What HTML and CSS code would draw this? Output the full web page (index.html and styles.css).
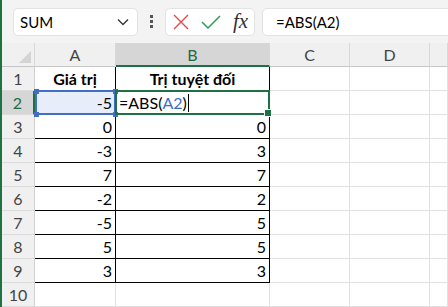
FILE: index.html
```html
<!DOCTYPE html>
<html lang="vi">
<head>
    <meta charset="UTF-8">
    <title>ABS</title>
    <link rel="stylesheet" href="styles.css">
</head>
<body>
    <div id="app">
        <div id="toolbar">
            <div id="nameBox">
                <span>SUM</span>
                <svg class="chev" width="12" height="8" viewBox="0 0 12 8"><polyline points="1,1.5 6,6.5 11,1.5" fill="none" stroke="#333" stroke-width="1.3"/></svg>
            </div>
            <div id="dots"><i></i><i></i><i></i></div>
            <div id="btnBox">
                <svg width="16" height="16" viewBox="0 0 16 16"><path d="M1 1 L15 15 M15 1 L1 15" stroke="#e5484d" stroke-width="1.4" fill="none"/></svg>
                <svg width="20" height="16" viewBox="0 0 20 16"><polyline points="1,8 7,14 19,2" stroke="#2e9b57" stroke-width="1.5" fill="none"/></svg>
                <span id="fx">fx</span>
            </div>
            <div id="formula">=ABS(A2)</div>
        </div>

        <div id="sheet">
            <div class="hd corner"></div>
            <div class="hd">A</div>
            <div class="hd sel">B</div>
            <div class="hd">C</div>
            <div class="hd">D</div>
            <div class="hd"></div>

            <div class="rh">1</div>
            <div class="c tb th">Giá trị</div>
            <div class="c tb th">Trị tuyệt đối</div>
            <div class="c"></div><div class="c"></div><div class="c"></div>

            <div class="rh sel">2</div>
            <div class="c tb num ref">-5<i class="knob tl"></i><i class="knob tr"></i><i class="knob bl"></i><i class="knob br"></i></div>
            <div class="c tb edit">=ABS(<span class="blue">A2</span>)<span class="caret"></span></div>
            <div class="c"></div><div class="c"></div><div class="c"></div>

            <div class="rh">3</div>
            <div class="c tb num">0</div>
            <div class="c tb num">0</div>
            <div class="c"></div><div class="c"></div><div class="c"></div>

            <div class="rh">4</div>
            <div class="c tb num">-3</div>
            <div class="c tb num">3</div>
            <div class="c"></div><div class="c"></div><div class="c"></div>

            <div class="rh">5</div>
            <div class="c tb num">7</div>
            <div class="c tb num">7</div>
            <div class="c"></div><div class="c"></div><div class="c"></div>

            <div class="rh">6</div>
            <div class="c tb num">-2</div>
            <div class="c tb num">2</div>
            <div class="c"></div><div class="c"></div><div class="c"></div>

            <div class="rh">7</div>
            <div class="c tb num">-5</div>
            <div class="c tb num">5</div>
            <div class="c"></div><div class="c"></div><div class="c"></div>

            <div class="rh">8</div>
            <div class="c tb num">5</div>
            <div class="c tb num">5</div>
            <div class="c"></div><div class="c"></div><div class="c"></div>

            <div class="rh">9</div>
            <div class="c tb num">3</div>
            <div class="c tb num">3</div>
            <div class="c"></div><div class="c"></div><div class="c"></div>

            <div class="rh">10</div>
            <div class="c"></div><div class="c"></div><div class="c"></div><div class="c"></div><div class="c"></div>
        </div>
    </div>
</body>
</html>
```

FILE: styles.css
```css
* { box-sizing: border-box; }
body { margin: 0; font-family: Lato, "Liberation Sans", sans-serif; color: #000; overflow: hidden; }
#app { width: 448px; height: 307px; border-left: 2px solid #1f7244; overflow: hidden; }

#toolbar {
    height: 43px; background-color: #f3f3f3;
    display: flex; align-items: center;
    padding-left: 11px;
}
#nameBox {
    width: 125px; height: 28px;
    background-color: white; border: 1px solid #e3e3e3; border-radius: 5px;
    display: flex; align-items: center;
    padding: 0 8px 0 6px;
    font-size: 15px;
}
#nameBox span { flex: 1; }
#dots { width: 27px; display: flex; flex-direction: column; align-items: center; gap: 2px; }
#dots i { width: 3px; height: 3px; background-color: #555; }
#btnBox {
    width: 90px; height: 28px;
    background-color: white; border: 1px solid #e3e3e3; border-radius: 5px;
    display: flex; align-items: center; gap: 12px;
    padding-left: 7px;
}
#fx { font-family: "Liberation Serif", serif; font-style: italic; font-size: 21px; color: #333; }
#formula {
    flex: 1; height: 28px; margin-left: 7px; margin-right: -10px;
    background-color: white; border: 1px solid #e3e3e3; border-radius: 5px;
    display: flex; align-items: center;
    padding-left: 13px; font-size: 15px;
}

#sheet {
    display: grid;
    grid-template-columns: 33px 81px 154px 80px 80px 1fr;
    grid-auto-rows: 24px;
}
.hd {
    background-color: #f0f0f0;
    border-right: 1px solid #d8d8d8; border-bottom: 1px solid #c6c6c6;
    display: flex; align-items: center; justify-content: center;
    font-size: 16px; color: #444;
}
.hd.sel { background-color: #d6d6d6; border-bottom: 2px solid #1e7145; color: #1e6a41; }
.corner { position: relative; }
.corner::after {
    content: ""; position: absolute; right: 3px; bottom: 3px;
    border-left: 12px solid transparent; border-bottom: 12px solid #d4d4d4;
}
.rh {
    background-color: #f0f0f0;
    border-right: 1px solid #d0d0d0; border-bottom: 1px solid #dcdcdc;
    display: flex; align-items: center; justify-content: center;
    font-size: 16px; color: #444;
}
.rh.sel { background-color: #d6d6d6; border-right: 2px solid #1e7145; color: #1e6a41; }
.c {
    border-right: 1px solid #e1e1e1; border-bottom: 1px solid #e1e1e1;
    display: flex; align-items: center;
    font-size: 16px; padding: 0 3px;
}
.tb { border-right: 1px solid #000; border-bottom: 1px solid #000; }
.th { font-weight: bold; justify-content: center; }
.num { justify-content: flex-end; }
.ref { background-color: #e8eef9; position: relative; }
.ref::before {
    content: ""; position: absolute; left: 0; top: -1px; right: -1px; bottom: -1px;
    border: 2px solid #3f70c6;
}
.knob { position: absolute; width: 5px; height: 5px; background-color: #3f70c6; }
.knob.tl { left: -1px; top: -2px; }
.knob.tr { right: -3px; top: -2px; }
.knob.bl { left: -1px; bottom: -3px; }
.knob.br { right: -3px; bottom: -3px; }
.edit { position: relative; padding-left: 3px; }
.edit::before {
    content: ""; position: absolute; left: -1px; top: -1px; right: -1px; bottom: -1px;
    border: 2px solid #1e7145;
}
.edit::after {
    content: ""; position: absolute; right: -3px; bottom: -3px;
    width: 6px; height: 6px; background-color: #1e7145; border: 1px solid white;
}
.blue { color: #3a6fc8; }
.caret { display: inline-block; width: 1px; height: 18px; background-color: #000; margin-left: 1px; }
```
